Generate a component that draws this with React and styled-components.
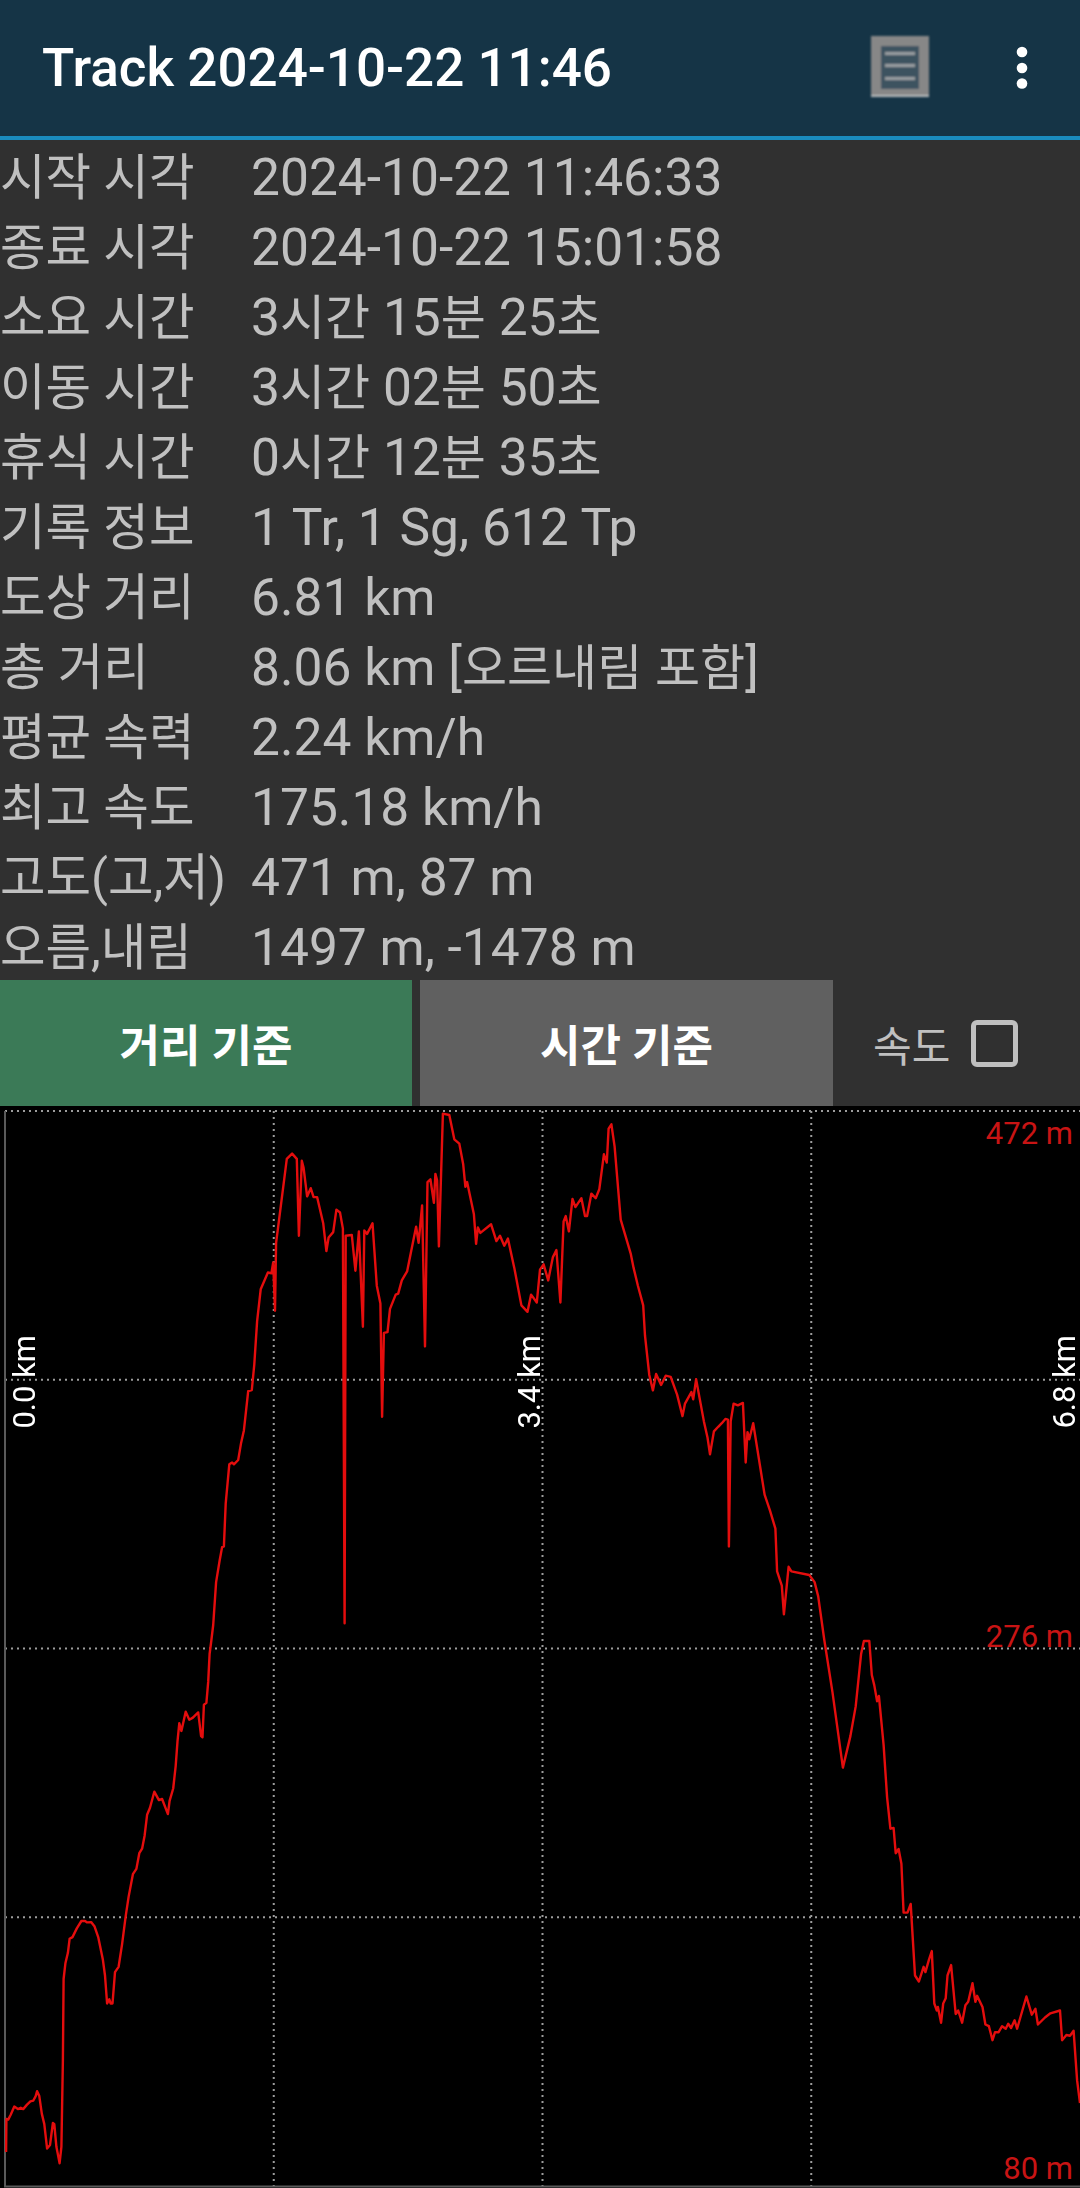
import React from "react";
import styled, { createGlobalStyle } from "styled-components";

const FONT = `Roboto, "Noto Sans CJK KR", sans-serif`;

const rows = [
	["시작 시각", "2024-10-22 11:46:33"],
	["종료 시각", "2024-10-22 15:01:58"],
	["소요 시간", "3시간 15분 25초"],
	["이동 시간", "3시간 02분 50초"],
	["휴식 시간", "0시간 12분 35초"],
	["기록 정보", "1 Tr, 1 Sg, 612 Tp"],
	["도상 거리", "6.81 km"],
	["총 거리", "8.06 km [오르내림 포함]"],
	["평균 속력", "2.24 km/h"],
	["최고 속도", "175.18 km/h"],
	["고도(고,저)", "471 m, 87 m"],
	["오름,내림", "1497 m, -1478 m"],
];

// elevation trace, read off in pieces from crops of the graph
const pieces = [
	{
		sx: 2.8, sy: 2.861, ox: 0, oy: 1640,
		pts: [[17,1465],[18,1370],[23,1372],[30,1358],[40,1335],[50,1342],[58,1338],[65,1342],[75,1330],[85,1320],[93,1318],[100,1305],[104,1291],[110,1305],[117,1355],[124,1385],[132,1455],[140,1445],[148,1382],[152,1385],[158,1450],[167,1497],[172,1450],[176,1200],[178,970],[183,925],[190,895],[195,855],[203,850],[215,825],[228,804],[238,804],[244,808],[255,807],[265,820],[275,850],[288,915],[294,960],[300,1040],[306,1028],[310,1040],[315,1040],[322,950],[332,935],[342,870],[352,790],[360,735],[372,670],[382,655],[390,610],[398,597],[405,560],[412,500],[420,480],[432,434],[445,458],[454,455],[470,498],[475,460],[485,425],[492,360],[497,290],[502,238],[508,260],[520,205],[530,228],[540,222],[555,207],[563,275],[567,278],[571,185],[578,180],[583,120],[587,40],[592,0]],
	},
	{
		sx: 2.8, sy: 2.8, ox: 0, oy: 1100,
		pts: [[597,1470],[605,1350],[615,1290],[622,1252],[627,1250],[632,1130],[642,1020],[650,1015],[655,1020],[667,1008],[675,960],[683,925],[695,815],[705,812],[712,740],[720,620],[730,530],[750,483],[760,485],[765,455],[770,590],[773,400],[782,330],[803,165],[818,150],[831,165],[837,380],[845,170],[850,190],[860,270],[870,247],[878,272],[888,272],[905,345],[914,423],[920,385],[933,370],[942,307],[952,315],[960,360],[965,1465],[968,380],[985,378],[995,478],[1005,368],[1016,635],[1020,365],[1028,375],[1043,345],[1055,520],[1065,570],[1070,887],[1075,652],[1085,650],[1092,585],[1108,545],[1115,542],[1125,505],[1140,480],[1150,430],[1165,355],[1172,400],[1182,295],[1190,690],[1197,230],[1205,222],[1215,288],[1219,207],[1224,225],[1229,410],[1240,38],[1258,42],[1272,110],[1286,122],[1297,180],[1303,243],[1308,230],[1327,320],[1333,403],[1338,357],[1345,372],[1375,348],[1390,395],[1400,380],[1412,408],[1422,388],[1440,470],[1460,575],[1477,593],[1487,545],[1503,567],[1512,475],[1522,460],[1535,505],[1548,440],[1558,420]],
	},
	{
		sx: 2.8, sy: 2.8, ox: 520, oy: 1100,
		pts: [[113,567],[122,340],[128,325],[137,368],[147,277],[155,300],[172,275],[182,325],[188,325],[200,262],[212,275],[222,250],[235,152],[243,175],[248,80],[256,68],[265,130],[282,335],[295,380],[310,430],[318,470],[330,520],[345,575],[350,660],[362,770],[372,813],[381,767],[395,798],[408,772],[422,775],[440,825],[455,885],[462,850],[480,818],[485,838],[493,782],[515,900],[525,945],[532,992],[543,928],[555,915],[565,905],[575,893],[582,895],[585,1250],[590,900],[598,850],[610,855],[624,848],[632,1015],[637,930],[642,950],[653,905],[685,1105],[700,1150],[715,1200],[720,1320],[733,1360],[739,1440],[752,1307],[760,1320],[810,1330],[825,1350],[835,1390]],
	},
	{
		sx: 2.8, sy: 2.861, ox: 520, oy: 1640,
		pts: [[852,0],[875,150],[904,365],[925,275],[940,190],[955,40],[963,3],[978,3],[985,100],[992,130],[1000,175],[1005,160],[1018,300],[1028,450],[1037,540],[1046,538],[1052,610],[1060,598],[1068,640],[1074,780],[1085,780],[1094,755],[1100,860],[1106,960],[1117,977],[1130,935],[1135,950],[1145,915],[1153,890],[1160,1040],[1167,1060],[1170,1050],[1179,1095],[1185,1040],[1192,1025],[1197,960],[1207,930],[1220,1070],[1227,1060],[1238,1095],[1247,1045],[1255,1035],[1267,982],[1275,1035],[1280,1018],[1295,1050],[1303,1100],[1313,1105],[1323,1145],[1330,1122],[1340,1122],[1350,1105],[1360,1112],[1367,1098],[1375,1110],[1385,1088],[1392,1112],[1418,1020],[1433,1072],[1443,1055],[1450,1100],[1470,1080],[1485,1068],[1512,1060],[1518,1145],[1530,1130],[1540,1132],[1550,1118],[1560,1260],[1568,1325]],
	},
];

const CHART_TOP = 1106;
const trace = pieces
	.flatMap((p) =>
		p.pts.map(([x, y]) => `${(p.ox + x / p.sx).toFixed(1)},${(p.oy + y / p.sy - CHART_TOP).toFixed(1)}`)
	)
	.join(" ");

const gridX = [273.75, 542.5, 811.25];
const gridY = [5, 273.75, 542.5, 811.25];

// digits run a little wider than the hangul in the values column
const splitHangul = (text) =>
	text.split(/([\uac00-\ud7a3]+)/).map((part, i) => (i % 2 ? <Hangul key={i}>{part}</Hangul> : part));

function MenuIcon() {
	return (
		<svg width="64" height="68" viewBox="0 0 64 68">
			<defs>
				<filter id="soft" x="-10%" y="-10%" width="120%" height="120%">
					<feGaussianBlur stdDeviation="1" />
				</filter>
			</defs>
			<g filter="url(#soft)">
				<rect x="3" y="3" width="58" height="61" fill="#878787" />
				<rect x="3" y="62" width="58" height="2" fill="#b5b9bb" />
				<rect x="13" y="13" width="38" height="43" fill="#3c5361" />
				<rect x="17" y="19" width="30" height="3" fill="#9a9fa2" />
				<rect x="17" y="31" width="30" height="3" fill="#9a9fa2" />
				<rect x="17" y="44" width="30" height="3" fill="#9a9fa2" />
			</g>
		</svg>
	);
}

function MoreIcon() {
	return (
		<svg width="12" height="44" viewBox="0 0 12 44">
			<circle cx="6" cy="6" r="5.3" fill="#fff" />
			<circle cx="6" cy="22" r="5.3" fill="#fff" />
			<circle cx="6" cy="37.5" r="5.3" fill="#fff" />
		</svg>
	);
}

export default function App() {
	return (
		<Screen>
			<GlobalStyle />
			<Header>
				<Title>Track 2024-10-22 11:46</Title>
				<MenuSlot>
					<MenuIcon />
				</MenuSlot>
				<MoreSlot>
					<MoreIcon />
				</MoreSlot>
			</Header>
			<Info>
				{rows.map(([label, value]) => (
					<Row key={label}>
						<Label>{label}</Label>
						<Value>{splitHangul(value)}</Value>
					</Row>
				))}
			</Info>
			<Controls>
				<ModeButton $bg="#3b7a57" $width={412}>거리 기준</ModeButton>
				<ModeButton $bg="#606060" $width={413}>시간 기준</ModeButton>
				<SpeedToggle>
					<span>속도</span>
					<CheckBox />
				</SpeedToggle>
			</Controls>
			<Chart>
				<svg width="1080" height="1082" viewBox="0 0 1080 1082">
					{gridY.map((y) => (
						<GridLine key={y} x1="5" x2="1080" y1={y} y2={y} />
					))}
					{gridX.map((x) => (
						<GridLine key={x} x1={x} x2={x} y1="5" y2="1080" />
					))}
					<line x1="5" x2="5" y1="5" y2="1081" stroke="#5a5a5a" strokeWidth="2" />
					<line x1="4" x2="1080" y1="1080.5" y2="1080.5" stroke="#5a5a5a" strokeWidth="2" />
					<polyline points={trace} fill="none" stroke="#e40d0d" strokeWidth="2.4" strokeLinejoin="round" />
				</svg>
				<DistanceLabel $left={12}>0.0 km</DistanceLabel>
				<DistanceLabel $left={517}>3.4 km</DistanceLabel>
				<DistanceLabel $left={1052}>6.8 km</DistanceLabel>
				<HeightLabel $top={10}>472 m</HeightLabel>
				<HeightLabel $top={513}>276 m</HeightLabel>
				<HeightLabel $top={1045}>80 m</HeightLabel>
			</Chart>
		</Screen>
	);
}

const GlobalStyle = createGlobalStyle`
	html, body {
		margin: 0;
		padding: 0;
		background: #303030;
	}
`;

const Screen = styled.div`
	width: 1080px;
	height: 2188px;
	overflow: hidden;
	background: #303030;
	font-family: ${FONT};
`;

const Header = styled.header`
	height: 136px;
	display: flex;
	align-items: center;
	background: #153446;
	border-bottom: 4px solid #1a8cbf;
`;

const Title = styled.h1`
	flex: 1;
	margin: 0 0 0 42px;
	font-size: 53px;
	font-weight: 500;
	color: #ffffff;
`;

const MenuSlot = styled.div`
	display: flex;
	margin: 0 84px 2px 0;
`;

const MoreSlot = styled.div`
	display: flex;
	margin-right: 52px;
`;

const Info = styled.div`
	height: 840px;
`;

const Row = styled.div`
	box-sizing: border-box;
	height: 70px;
	padding-top: 3px;
	display: grid;
	grid-template-columns: 251px 1fr;
	line-height: 70px;
	color: #c0c0c0;
	white-space: nowrap;
`;

const Label = styled.span`
	font-size: 49.5px;
`;

const Value = styled.span`
	font-size: 51.5px;
`;

const Hangul = styled.span`
	font-size: 49px;
`;

const Controls = styled.div`
	height: 126px;
	display: flex;
	gap: 8px;
`;

const ModeButton = styled.div`
	width: ${(p) => p.$width}px;
	display: flex;
	align-items: center;
	justify-content: center;
	background: ${(p) => p.$bg};
	color: #ffffff;
	font-size: 44px;
	font-weight: 700;
`;

const SpeedToggle = styled.div`
	flex: 1;
	display: flex;
	align-items: center;
	padding-left: 32px;
	gap: 21px;
	color: #c0c0c0;
	font-size: 42px;
`;

const CheckBox = styled.div`
	box-sizing: border-box;
	width: 47px;
	height: 47px;
	border: 5px solid #c0c0c0;
	border-radius: 6px;
`;

const Chart = styled.div`
	position: relative;
	height: 1082px;
	background: #000000;

	svg {
		display: block;
	}
`;

const GridLine = styled.line`
	stroke: #9c9c9c;
	stroke-width: 2;
	stroke-dasharray: 2 4;
`;

const DistanceLabel = styled.span`
	position: absolute;
	top: 229px;
	left: ${(p) => p.$left}px;
	writing-mode: vertical-rl;
	transform: rotate(180deg);
	font-size: 31px;
	line-height: 26px;
	color: #ffffff;
	white-space: nowrap;
`;

const HeightLabel = styled.span`
	position: absolute;
	top: ${(p) => p.$top}px;
	right: 7px;
	font-size: 31px;
	line-height: 36px;
	color: #c81414;
`;
